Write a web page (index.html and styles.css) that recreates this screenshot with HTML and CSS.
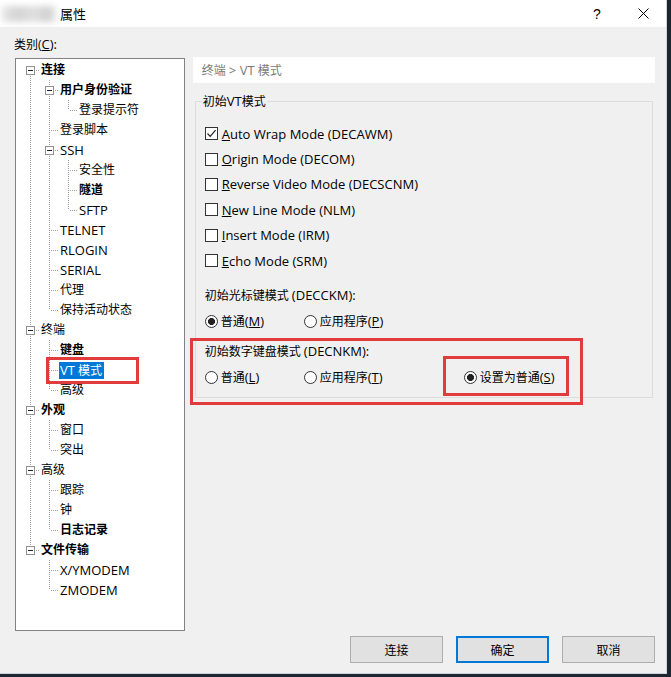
FILE: index.html
```html
<!DOCTYPE html>
<html>
<head>
<meta charset="utf-8">
<link rel="stylesheet" href="styles.css">
</head>
<body>
<div class="window">
  <div class="titlebar">
    <span class="title-blur"></span>
    <span class="title">属性</span>
    <span class="cap help">?</span>
    <span class="cap close"><svg width="11" height="11" viewBox="0 0 11 11"><path d="M0.5 0.5L10.5 10.5M10.5 0.5L0.5 10.5" stroke="#000" stroke-width="1" fill="none"/></svg></span>
  </div>
  <div class="client">
    <div class="cat-label">类别(<u class="lat">C</u><span class="lat">):</span></div>
    <div class="main">
      <div class="tree">
        <div class="row"><span class="g x xb"><span class="pm"></span></span><span class="lbl b">连接</span></div>
        <div class="row"><span class="g v"></span><span class="g x xa xb"><span class="pm"></span></span><span class="lbl b">用户身份验证</span></div>
        <div class="row"><span class="g v"></span><span class="g v"></span><span class="g c"></span><span class="lbl">登录提示符</span></div>
        <div class="row"><span class="g v"></span><span class="g t"></span><span class="lbl">登录脚本</span></div>
        <div class="row"><span class="g v"></span><span class="g x xa xb"><span class="pm"></span></span><span class="lbl lat">SSH</span></div>
        <div class="row"><span class="g v"></span><span class="g v"></span><span class="g t"></span><span class="lbl">安全性</span></div>
        <div class="row"><span class="g v"></span><span class="g v"></span><span class="g t"></span><span class="lbl b">隧道</span></div>
        <div class="row"><span class="g v"></span><span class="g v"></span><span class="g c"></span><span class="lbl lat">SFTP</span></div>
        <div class="row"><span class="g v"></span><span class="g t"></span><span class="lbl lat">TELNET</span></div>
        <div class="row"><span class="g v"></span><span class="g t"></span><span class="lbl lat">RLOGIN</span></div>
        <div class="row"><span class="g v"></span><span class="g t"></span><span class="lbl lat">SERIAL</span></div>
        <div class="row"><span class="g v"></span><span class="g t"></span><span class="lbl">代理</span></div>
        <div class="row"><span class="g v"></span><span class="g c"></span><span class="lbl">保持活动状态</span></div>
        <div class="row"><span class="g x xa xb"><span class="pm"></span></span><span class="lbl">终端</span></div>
        <div class="row"><span class="g v"></span><span class="g t"></span><span class="lbl b">键盘</span></div>
        <div class="row"><span class="g v"></span><span class="g t"></span><span class="lbl sel"><span class="lat">VT</span> 模式</span></div>
        <div class="row"><span class="g v"></span><span class="g c"></span><span class="lbl">高级</span></div>
        <div class="row"><span class="g x xa xb"><span class="pm"></span></span><span class="lbl b">外观</span></div>
        <div class="row"><span class="g v"></span><span class="g t"></span><span class="lbl">窗口</span></div>
        <div class="row"><span class="g v"></span><span class="g c"></span><span class="lbl">突出</span></div>
        <div class="row"><span class="g x xa xb"><span class="pm"></span></span><span class="lbl">高级</span></div>
        <div class="row"><span class="g v"></span><span class="g t"></span><span class="lbl">跟踪</span></div>
        <div class="row"><span class="g v"></span><span class="g t"></span><span class="lbl">钟</span></div>
        <div class="row"><span class="g v"></span><span class="g c"></span><span class="lbl b">日志记录</span></div>
        <div class="row"><span class="g x xa"><span class="pm"></span></span><span class="lbl b">文件传输</span></div>
        <div class="row"><span class="g"></span><span class="g t"></span><span class="lbl lat">X/YMODEM</span></div>
        <div class="row"><span class="g"></span><span class="g c"></span><span class="lbl lat">ZMODEM</span></div>
      </div>
      <div class="panel">
        <div class="crumb">终端 <span class="lat">&gt; VT</span> 模式</div>
        <fieldset class="group">
          <legend>初始<span class="lat">VT</span>模式</legend>
          <div class="checks">
            <div class="chk"><span class="box"><svg width="11" height="11" viewBox="0 0 11 11"><path d="M1.5 5.5L4.2 8.3L9.6 2.2" stroke="#222" stroke-width="1.2" fill="none"/></svg></span><span class="lat"><u>A</u>uto Wrap Mode (DECAWM)</span></div>
            <div class="chk"><span class="box"></span><span class="lat"><u>O</u>rigin Mode (DECOM)</span></div>
            <div class="chk"><span class="box"></span><span class="lat"><u>R</u>everse Video Mode (DECSCNM)</span></div>
            <div class="chk"><span class="box"></span><span class="lat"><u>N</u>ew Line Mode (NLM)</span></div>
            <div class="chk"><span class="box"></span><span class="lat"><u>I</u>nsert Mode (IRM)</span></div>
            <div class="chk"><span class="box"></span><span class="lat"><u>E</u>cho Mode (SRM)</span></div>
          </div>
          <div class="sub s1">初始光标键模式 <span class="lat">(DECCKM):</span></div>
          <div class="radios">
            <div class="rad on"><span class="dot"></span><span>普通<span class="lat">(<u>M</u>)</span></span></div>
            <div class="rad"><span class="dot"></span><span>应用程序<span class="lat">(<u>P</u>)</span></span></div>
          </div>
          <div class="sub s2">初始数字键盘模式 <span class="lat">(DECNKM):</span></div>
          <div class="radios">
            <div class="rad"><span class="dot"></span><span>普通<span class="lat">(<u>L</u>)</span></span></div>
            <div class="rad"><span class="dot"></span><span>应用程序<span class="lat">(<u>T</u>)</span></span></div>
            <div class="rad on"><span class="dot"></span><span>设置为普通<span class="lat">(<u>S</u>)</span></span></div>
          </div>
        </fieldset>
      </div>
    </div>
    <div class="buttons">
      <span class="btn">连接</span>
      <span class="btn def">确定</span>
      <span class="btn">取消</span>
    </div>
  </div>
  <div class="anno a-tree"></div>
  <div class="anno a-group"></div>
  <div class="anno a-opt"></div>
</div>
</body>
</html>
```
FILE: styles.css
```css
html, body {
  margin: 0;
  padding: 0;
}
body {
  width: 671px;
  height: 677px;
  overflow: hidden;
  background: #1c2630;
}
.window {
  position: relative;
  width: 667px;
  height: 674px;
  box-sizing: border-box;
  background: #f0f0f0;
  border-right: 1px solid #cfd4d8;
  border-bottom: 1px solid #cfd4d8;
  font-family: "Open Sans", "Noto Sans CJK SC", sans-serif;
  font-size: 12px;
  color: #000;
  text-autospace: no-autospace;
}
.lat {
  font-size: 13px;
}
u {
  text-decoration: underline;
  text-underline-offset: 1px;
}

/* title bar */
.titlebar {
  height: 27px;
  background: #fff;
  display: flex;
  align-items: center;
}
.title-blur {
  width: 54px;
  height: 16px;
  margin-left: 2px;
  background: linear-gradient(90deg, #e6e6e6, #d4d4d4 30%, #e0e0e0 60%, #cfcfcf 85%, #eaeaea);
  filter: blur(3px);
}
.title {
  margin-left: 4px;
  font-size: 13px;
  line-height: 18px;
}
.cap {
  width: 46px;
  height: 27px;
  display: flex;
  align-items: center;
  justify-content: center;
}
.help {
  margin-left: auto;
  font-size: 14px;
  font-family: "Liberation Sans", sans-serif;
}

/* client */
.client {
  padding: 0 11px 0 15px;
}
.cat-label {
  margin: 9px 0 0 -1px;
  line-height: 16px;
  height: 16px;
}
.main {
  display: flex;
  gap: 8px;
  margin-top: 6px;
}

/* tree */
.tree {
  width: 170px;
  height: 573px;
  box-sizing: border-box;
  border: 1px solid #828282;
  background: #fff;
  padding: 1px 0 0 5px;
}
.row {
  display: flex;
  height: 20px;
  align-items: center;
}
.g {
  flex: none;
  width: 19px;
  height: 20px;
  box-sizing: border-box;
  --dv: repeating-linear-gradient(to bottom, #a0a0a0 0 1px, transparent 1px 2px);
  --dh: repeating-linear-gradient(to right, #a0a0a0 0 1px, transparent 1px 2px);
}
.g.v {
  background: var(--dv) 9px 0 / 1px 20px no-repeat;
}
.g.t {
  background: var(--dv) 9px 0 / 1px 20px no-repeat, var(--dh) 11px 10px / 8px 1px no-repeat;
}
.g.c {
  background: var(--dv) 9px 0 / 1px 10px no-repeat, var(--dh) 11px 10px / 8px 1px no-repeat;
}
.g.x {
  padding: 6px 0 0 5px;
  background: var(--dh) 15px 10px / 4px 1px no-repeat;
}
.g.x.xa {
  background: var(--dv) 9px 0 / 1px 6px no-repeat, var(--dh) 15px 10px / 4px 1px no-repeat;
}
.g.x.xb {
  background: var(--dv) 9px 16px / 1px 4px no-repeat, var(--dh) 15px 10px / 4px 1px no-repeat;
}
.g.x.xa.xb {
  background: var(--dv) 9px 0 / 1px 6px no-repeat, var(--dv) 9px 16px / 1px 4px no-repeat, var(--dh) 15px 10px / 4px 1px no-repeat;
}
.pm {
  display: block;
  width: 9px;
  height: 9px;
  box-sizing: border-box;
  border: 1px solid #919191;
  background: linear-gradient(#222, #222) 1px 3px / 5px 1px no-repeat, #fff;
}
.lbl {
  padding: 0 1px;
  line-height: 16px;
  white-space: nowrap;
}
.lbl.b {
  font-weight: bold;
}
.lbl.sel {
  background: #0078d7;
  color: #fff;
  padding: 0 2px 0 1px;
}

/* right panel */
.panel {
  width: 463px;
}
.crumb {
  height: 26px;
  margin-top: -1px;
  background: #fff;
  color: #7a7a7a;
  line-height: 26px;
  padding-left: 9px;
}
.group {
  margin: 10px 2px 0 2px;
  padding: 0 0 10px 9px;
  border: 1px solid #dcdcdc;
  min-width: 0;
}
.group legend {
  padding: 0 1px;
  margin-left: -3px;
  line-height: 16px;
}
.checks {
  margin-top: 11px;
}
.chk {
  height: 25.4px;
  display: flex;
  align-items: center;
  gap: 4px;
}
.box {
  width: 13px;
  height: 13px;
  box-sizing: border-box;
  border: 1px solid #333;
  background: #fff;
  display: flex;
  align-items: center;
  justify-content: center;
}
.sub {
  line-height: 16px;
}
.sub.s1 {
  margin-top: 14px;
}
.sub.s2 {
  margin-top: 12px;
}
.radios {
  display: grid;
  grid-template-columns: 99px 160px auto;
  height: 20px;
  margin-top: 7px;
}
.rad {
  display: flex;
  align-items: center;
  gap: 3px;
}
.dot {
  width: 13px;
  height: 13px;
  box-sizing: border-box;
  border: 1px solid #333;
  border-radius: 50%;
  background: #fff;
  flex: none;
}
.rad.on .dot {
  background: radial-gradient(circle, #222 0 3.2px, #fff 3.8px);
}

/* buttons */
.buttons {
  display: flex;
  justify-content: flex-end;
  gap: 13px;
  margin-top: 5px;
}
.btn {
  width: 93px;
  height: 27px;
  box-sizing: border-box;
  border: 1px solid #adadad;
  background: #e1e1e1;
  display: flex;
  align-items: center;
  justify-content: center;
}
.btn.def {
  border: 2px solid #0078d7;
}

/* annotations */
.anno {
  position: absolute;
  border: 3px solid #e23b3b;
  box-sizing: border-box;
}
.a-tree {
  left: 46px;
  top: 357px;
  width: 93px;
  height: 27px;
}
.a-group {
  left: 190px;
  top: 338px;
  width: 393px;
  height: 67px;
}
.a-opt {
  left: 443px;
  top: 356px;
  width: 126px;
  height: 40px;
}
```
